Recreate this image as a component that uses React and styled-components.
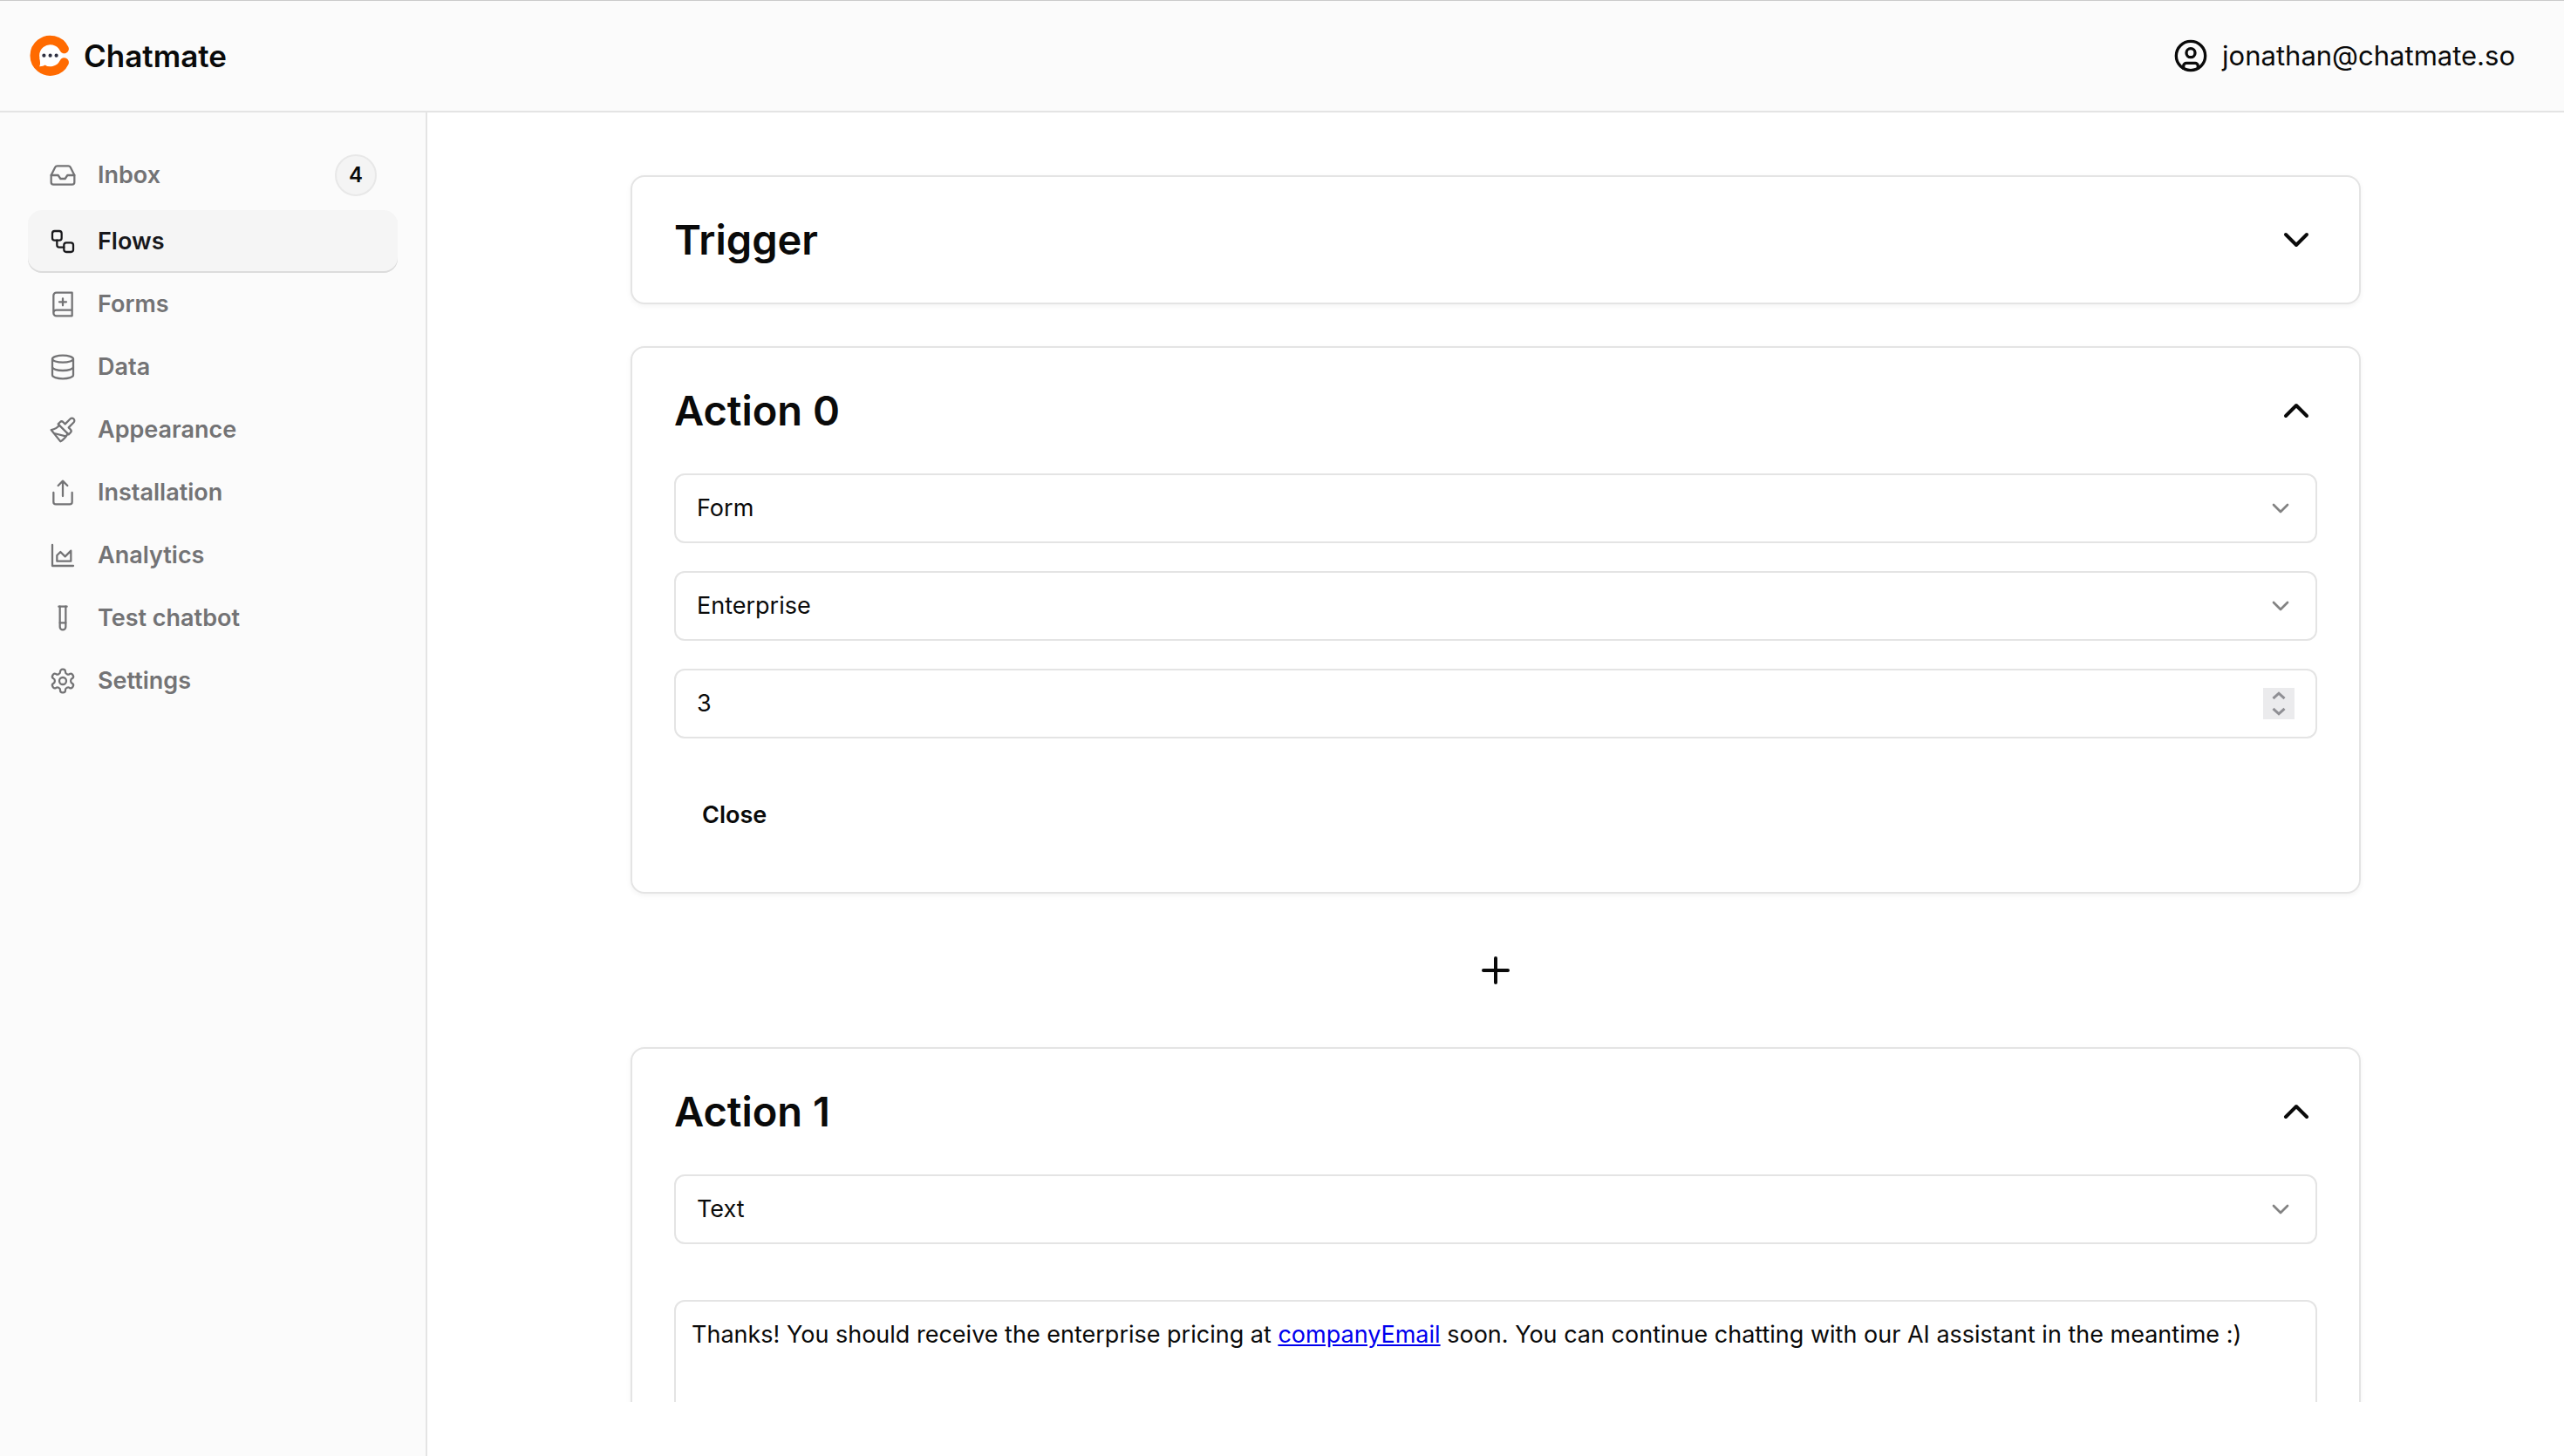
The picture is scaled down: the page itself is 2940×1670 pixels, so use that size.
import React, { useState } from "react";
import styled, { createGlobalStyle } from "styled-components";

const GlobalStyle = createGlobalStyle`
  *, *::before, *::after { box-sizing: border-box; }
  body {
    margin: 0;
    background: #ffffff;
    color: #0a0a0a;
    font-family: Inter, "Liberation Sans", sans-serif;
    font-size: 27px;
    line-height: 40px;
  }
  button, input, select { font: inherit; color: inherit; }
`;

const Shell = styled.div`
  height: 100vh;
  display: grid;
  grid-template-columns: 490px minmax(0, 1fr);
  grid-template-rows: auto minmax(0, 1fr);
`;

const Header = styled.header`
  grid-column: 1 / -1;
  display: flex;
  align-items: center;
  justify-content: space-between;
  padding: 39px 56px 39px 32px;
  background: #fbfbfb;
  border-top: 1px solid #cacaca;
  border-bottom: 2px solid #e4e4e4;
`;

const Brand = styled.a`
  display: flex;
  align-items: center;
  gap: 16px;
  font-size: 35px;
  line-height: 48px;
  font-weight: 600;
  color: inherit;
  text-decoration: none;
`;

const Account = styled.button`
  display: flex;
  align-items: center;
  gap: 16px;
  padding: 0;
  border: 0;
  background: none;
  font-size: 31px;
  line-height: 48px;
  cursor: pointer;
`;

const Sidebar = styled.nav`
  padding: 32px;
  background: #fbfbfb;
  border-right: 2px solid #e4e4e4;
`;

const NavLink = styled.a`
  display: flex;
  align-items: center;
  gap: 24px;
  padding: 16px 24px;
  border-radius: 16px;
  font-weight: 600;
  text-decoration: none;
  color: ${(p) => (p.$active ? "#18181b" : "#737375")};
  background: ${(p) => (p.$active ? "#f5f5f5" : "transparent")};
  box-shadow: ${(p) => (p.$active ? "inset 0 -2px 0 #dcdcdc" : "none")};
`;

const Badge = styled.span`
  display: flex;
  align-items: center;
  justify-content: center;
  width: 48px;
  height: 48px;
  margin-left: auto;
  border: 2px solid #e8e8e8;
  border-radius: 50%;
  background: #f4f4f4;
  color: #0a0a0a;
  font-size: 24px;
  font-weight: 600;
`;

const Main = styled.main`
  display: flex;
  padding-bottom: 62px;
  min-height: 0;
`;

const Scroller = styled.div`
  flex: 1;
  overflow-y: auto;
  scrollbar-width: none;
  padding-top: 72px;
`;

const Flow = styled.div`
  display: flex;
  flex-direction: column;
  gap: 48px;
  max-width: 2048px;
  margin: 0 auto;
  padding: 0 32px;
`;

const Card = styled.section`
  display: flex;
  flex-direction: column;
  gap: 48px;
  padding: 48px;
  border: 2px solid #e4e4e4;
  border-radius: 16px;
  background: #ffffff;
  box-shadow: 0 2px 6px rgba(0, 0, 0, 0.05);
`;

const CardHeader = styled.div`
  display: flex;
  align-items: center;
  justify-content: space-between;
`;

const CardTitle = styled.h2`
  margin: 0;
  font-size: 47px;
  line-height: 48px;
  font-weight: 600;
`;

const IconButton = styled.button`
  display: flex;
  padding: 0;
  border: 0;
  background: none;
  cursor: pointer;
`;

const AddButton = styled(IconButton)`
  align-self: center;
  padding: 16px;
`;

const Fields = styled.div`
  display: flex;
  flex-direction: column;
  gap: 32px;
`;

const SelectBox = styled.div`
  display: grid;
  align-items: center;
  & > * { grid-area: 1 / 1; }
  & > svg {
    justify-self: end;
    margin-right: 26px;
    opacity: 0.5;
    pointer-events: none;
  }
`;

const SelectInput = styled.select`
  appearance: none;
  width: 100%;
  height: 80px;
  padding: 0 24px;
  border: 2px solid #e4e4e4;
  border-radius: 12px;
  background: transparent;
`;

const NumberBox = styled.div`
  display: flex;
  align-items: center;
  height: 80px;
  padding: 0 24px;
  border: 2px solid #e4e4e4;
  border-radius: 12px;
`;

const NumberInput = styled.input`
  flex: 1;
  min-width: 0;
  height: 40px;
  padding: 0;
  border: 0;
  outline: 0;
  background: none;
  appearance: textfield;
  &::-webkit-inner-spin-button { appearance: none; margin: 0; }
`;

const Stepper = styled.div`
  display: flex;
  flex-direction: column;
  background: #ebebed;
`;

const StepButton = styled.button`
  display: flex;
  align-items: center;
  justify-content: center;
  width: 36px;
  height: 18px;
  padding: 0;
  border: 0;
  background: none;
`;

const CloseButton = styled.button`
  align-self: flex-start;
  height: 80px;
  padding: 0 32px;
  border: 0;
  border-radius: 12px;
  background: none;
  font-weight: 600;
  cursor: pointer;
`;

const MessageFields = styled(Fields)`
  gap: 64px;
`;

const Editor = styled.div`
  min-height: 400px;
  padding: 18px;
  border: 2px solid #e4e4e4;
  border-radius: 12px;
  outline: 0;
  p { margin: 0; }
  a { color: #0000ee; text-decoration: underline; }
`;

const Icon = ({ size = 32, stroke = 1.7, children }) => (
  <svg
    width={size}
    height={size}
    viewBox="0 0 24 24"
    fill="none"
    stroke="currentColor"
    strokeWidth={stroke}
    strokeLinecap="round"
    strokeLinejoin="round"
    aria-hidden="true"
  >
    {children}
  </svg>
);

const Logo = () => (
  <svg width="48" height="48" viewBox="0 0 48 48" aria-hidden="true">
    <circle cx="25.5" cy="23.8" r="14" fill="#ffffff" />
    <path
      d="M41.6 16 A17.8 17.8 0 1 0 41.6 31.6"
      fill="none"
      stroke="#ff6a00"
      strokeWidth="10.6"
      strokeLinecap="round"
    />
    <path d="M13.4 27 C14 31 14.6 33.6 13.2 36.2 C16 36.3 18 35.6 19.6 34.6 L22 30 Z" fill="#ffffff" />
    <circle cx="18.4" cy="23.7" r="2.1" fill="#2f3142" />
    <circle cx="25.6" cy="23.7" r="2.1" fill="#2f3142" />
    <circle cx="32.6" cy="23.7" r="2.1" fill="#2f3142" />
  </svg>
);

const Chevron = ({ up, size, stroke }) => (
  <Icon size={size} stroke={stroke}>
    <path d={up ? "m18 15-6-6-6 6" : "m6 9 6 6 6-6"} />
  </Icon>
);

const StepArrow = ({ up }) => (
  <svg width="16" height="10" viewBox="0 0 16 10" fill="none" stroke="#8f8f94" strokeWidth="3" aria-hidden="true">
    <path d={up ? "M1.5 8.2 8 2.2l6.5 6" : "M1.5 1.8 8 7.8l6.5-6"} />
  </svg>
);

const NAV = [
  {
    label: "Inbox",
    count: 4,
    icon: (
      <>
        <path d="M22 12h-6l-2 3h-4l-2-3H2" />
        <path d="M5.45 5.11 2 12v6a2 2 0 0 0 2 2h16a2 2 0 0 0 2-2v-6l-3.45-6.89A2 2 0 0 0 16.76 4H7.24a2 2 0 0 0-1.79 1.11z" />
      </>
    ),
  },
  {
    label: "Flows",
    active: true,
    icon: (
      <>
        <rect width="8" height="8" x="3" y="3" rx="2" />
        <path d="M7 11v4a2 2 0 0 0 2 2h4" />
        <rect width="8" height="8" x="13" y="13" rx="2" />
      </>
    ),
  },
  {
    label: "Forms",
    icon: (
      <>
        <path d="M4 19.5v-15A2.5 2.5 0 0 1 6.5 2H20v20H6.5a2.5 2.5 0 0 1 0-5H20" />
        <path d="M9 10h6M12 7v6" />
      </>
    ),
  },
  {
    label: "Data",
    icon: (
      <>
        <ellipse cx="12" cy="5" rx="9" ry="3" />
        <path d="M3 5v14a9 3 0 0 0 18 0V5" />
        <path d="M3 12a9 3 0 0 0 18 0" />
      </>
    ),
  },
  {
    label: "Appearance",
    icon: (
      <>
        <path d="M18.37 2.63 14 7l-1.59-1.59a2 2 0 0 0-2.82 0L8 7l9 9 1.59-1.59a2 2 0 0 0 0-2.82L17 10l4.37-4.37a2.12 2.12 0 1 0-3-3Z" />
        <path d="M9 8c-2 3-4 3.5-7 4l8 10c2-1 6-5 6-7" />
        <path d="M14.5 17.5 4.5 15" />
      </>
    ),
  },
  {
    label: "Installation",
    icon: (
      <>
        <path d="M4 12v8a2 2 0 0 0 2 2h12a2 2 0 0 0 2-2v-8" />
        <path d="m16 6-4-4-4 4M12 2v13" />
      </>
    ),
  },
  {
    label: "Analytics",
    icon: (
      <>
        <path d="M3 3v18h18" />
        <path d="M7 12v5h12V8l-5 5-4-4Z" />
      </>
    ),
  },
  {
    label: "Test chatbot",
    icon: (
      <>
        <path d="M14.5 2v17.5c0 1.4-1.1 2.5-2.5 2.5s-2.5-1.1-2.5-2.5V2" />
        <path d="M8.5 2h7M14.5 16h-5" />
      </>
    ),
  },
  {
    label: "Settings",
    icon: (
      <>
        <path d="M12.22 2h-.44a2 2 0 0 0-2 2v.18a2 2 0 0 1-1 1.73l-.43.25a2 2 0 0 1-2 0l-.15-.08a2 2 0 0 0-2.73.73l-.22.38a2 2 0 0 0 .73 2.73l.15.1a2 2 0 0 1 1 1.72v.51a2 2 0 0 1-1 1.74l-.15.09a2 2 0 0 0-.73 2.73l.22.38a2 2 0 0 0 2.73.73l.15-.08a2 2 0 0 1 2 0l.43.25a2 2 0 0 1 1 1.73V20a2 2 0 0 0 2 2h.44a2 2 0 0 0 2-2v-.18a2 2 0 0 1 1-1.73l.43-.25a2 2 0 0 1 2 0l.15.08a2 2 0 0 0 2.73-.73l.22-.39a2 2 0 0 0-.73-2.73l-.15-.08a2 2 0 0 1-1-1.74v-.5a2 2 0 0 1 1-1.74l.15-.09a2 2 0 0 0 .73-2.73l-.22-.38a2 2 0 0 0-2.73-.73l-.15.08a2 2 0 0 1-2 0l-.43-.25a2 2 0 0 1-1-1.73V4a2 2 0 0 0-2-2z" />
        <circle cx="12" cy="12" r="3" />
      </>
    ),
  },
];

const SelectField = ({ label, options }) => (
  <SelectBox>
    <SelectInput aria-label={label} defaultValue={options[0]}>
      {options.map((o) => (
        <option key={o}>{o}</option>
      ))}
    </SelectInput>
    <Chevron size={32} stroke={2} />
  </SelectBox>
);

const NumberField = ({ label, initial }) => {
  const [value, setValue] = useState(initial);
  return (
    <NumberBox>
      <NumberInput
        type="number"
        aria-label={label}
        value={value}
        onChange={(e) => setValue(Number(e.target.value))}
      />
      <Stepper>
        <StepButton type="button" aria-label="Increase" onClick={() => setValue(value + 1)}>
          <StepArrow up />
        </StepButton>
        <StepButton type="button" aria-label="Decrease" onClick={() => setValue(value - 1)}>
          <StepArrow />
        </StepButton>
      </Stepper>
    </NumberBox>
  );
};

const Step = ({ title, startOpen, children }) => {
  const [open, setOpen] = useState(startOpen);
  return (
    <Card>
      <CardHeader>
        <CardTitle>{title}</CardTitle>
        <IconButton type="button" aria-label={`Toggle ${title}`} aria-expanded={open} onClick={() => setOpen(!open)}>
          <Chevron up={open} size={48} stroke={2} />
        </IconButton>
      </CardHeader>
      {open && children}
    </Card>
  );
};

export default function App() {
  return (
    <>
      <GlobalStyle />
      <Shell>
        <Header>
          <Brand href="#">
            <Logo />
            Chatmate
          </Brand>
          <Account type="button">
            <Icon size={40} stroke={2}>
              <circle cx="12" cy="12" r="10" />
              <circle cx="12" cy="10" r="3" />
              <path d="M7 20.662V19a2 2 0 0 1 2-2h6a2 2 0 0 1 2 2v1.662" />
            </Icon>
            jonathan@chatmate.so
          </Account>
        </Header>
        <Sidebar aria-label="Main">
          {NAV.map((item) => (
            <NavLink key={item.label} href="#" $active={item.active}>
              <Icon>{item.icon}</Icon>
              {item.label}
              {item.count && <Badge>{item.count}</Badge>}
            </NavLink>
          ))}
        </Sidebar>
        <Main>
          <Scroller>
            <Flow>
              <Step title="Trigger" startOpen={false} />
              <Step title="Action 0" startOpen>
                <Fields>
                  <SelectField label="Action type" options={["Form", "Text"]} />
                  <SelectField label="Form" options={["Enterprise"]} />
                  <NumberField label="Form position" initial={3} />
                </Fields>
                <CloseButton type="button">Close</CloseButton>
              </Step>
              <AddButton type="button" aria-label="Add action">
                <Icon size={48} stroke={2}>
                  <path d="M5 12h14M12 5v14" />
                </Icon>
              </AddButton>
              <Step title="Action 1" startOpen>
                <MessageFields>
                  <SelectField label="Action type" options={["Text", "Form"]} />
                  <Editor role="textbox" aria-label="Message" contentEditable suppressContentEditableWarning spellCheck={false}>
                    <p>
                      Thanks! You should receive the enterprise pricing at <a href="#companyEmail">companyEmail</a> soon. You
                      can continue chatting with our AI assistant in the meantime :)
                    </p>
                  </Editor>
                </MessageFields>
              </Step>
            </Flow>
          </Scroller>
        </Main>
      </Shell>
    </>
  );
}
